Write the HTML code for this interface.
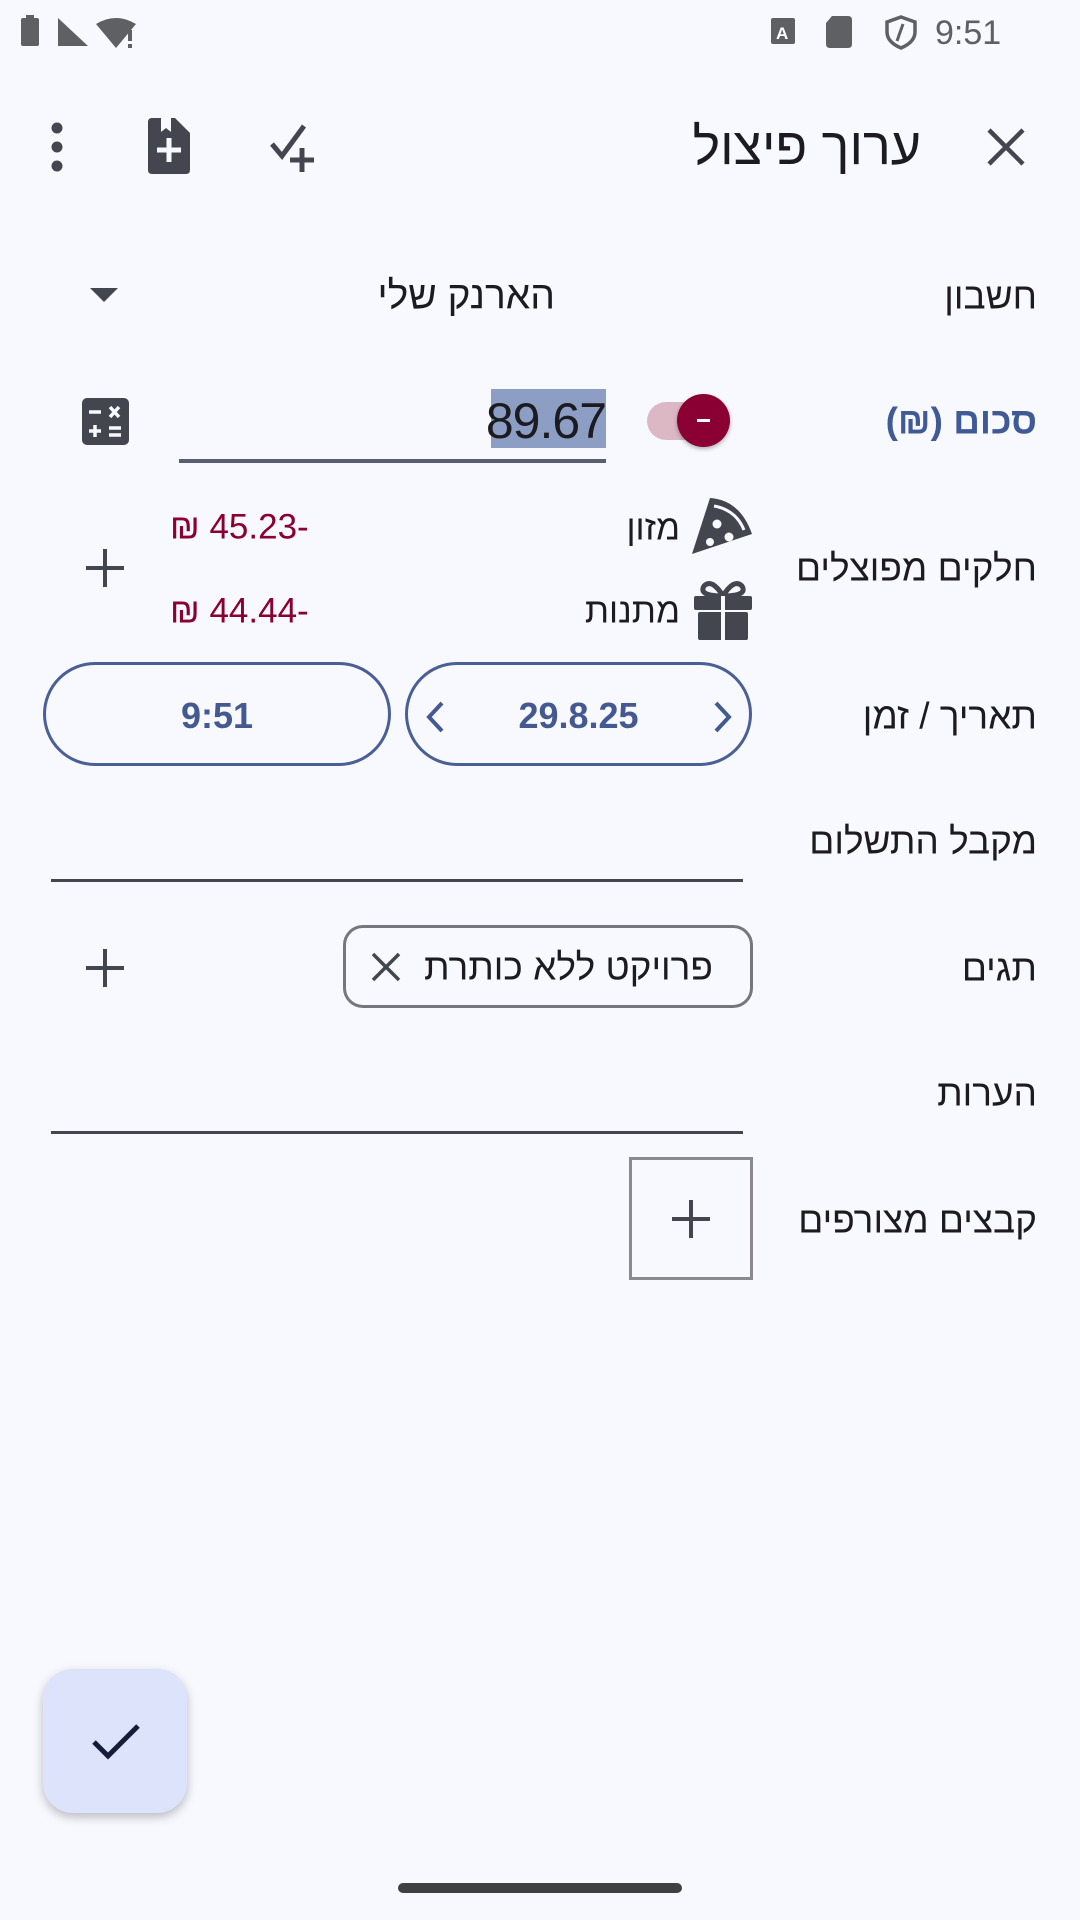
<!DOCTYPE html>
<html><head><meta charset="utf-8"><style>
*{margin:0;padding:0;box-sizing:border-box}
body{width:1080px;height:1920px;background:#f8f9ff;font-family:"Liberation Sans","DejaVu Sans",sans-serif;color:#1b1b21;position:relative;overflow:hidden}
.a{position:absolute}
.t{position:absolute;direction:rtl;white-space:nowrap;line-height:1;transform:translateY(-50%)}
.lbl{right:43px;font-size:37px;color:#1d1b20}
svg{position:absolute}
.ul{position:absolute;height:3px;background:#44464f}
</style></head><body>

<!-- status bar -->
<svg style="left:18px;top:14px" width="120" height="36" viewBox="0 0 120 36">
<rect x="3" y="4" width="18" height="28" rx="2" fill="#5f6064"/><rect x="8" y="1" width="8" height="4" fill="#5f6064"/>
<path d="M40 32 L40 4 L70 32 Z" fill="#5f6064"/>
<path d="M78 10 Q98 -2 118 10 L98 34 Z" fill="#5f6064"/>
<rect x="110" y="16" width="4" height="11" fill="#5f6064"/><rect x="110" y="30" width="4" height="4" fill="#5f6064"/>
</svg>
<svg style="left:770px;top:14px" width="160" height="38" viewBox="0 0 160 38">
<rect x="1" y="4" width="24" height="26" rx="2" fill="#5f6064"/><text x="6" y="25" font-size="17" font-family="Liberation Sans" fill="#fff" font-weight="bold">A</text>
<path d="M62 2 H78 Q82 2 82 6 V30 Q82 34 78 34 H60 Q56 34 56 30 V9 Z" fill="#5f6064"/>
<path d="M131 3 L145 8 V18 Q145 28 131 34 Q117 28 117 18 V8 Z" fill="none" stroke="#5f6064" stroke-width="3.5"/>
<path d="M133 10 L127 27" stroke="#5f6064" stroke-width="3"/>
</svg>
<div class="t" style="left:935px;top:33px;direction:ltr;font-size:34px;color:#5f6064">9:51</div>

<!-- toolbar -->
<svg style="left:985px;top:126px" width="42" height="42" viewBox="0 0 42 42"><path d="M4 4 L38 38 M38 4 L4 38" stroke="#44464f" stroke-width="4.5"/></svg>
<div class="t" style="right:159px;top:147px;font-size:52px;color:#1b1b21">ערוך פיצול</div>
<svg style="left:270px;top:122px" width="52" height="52" viewBox="0 0 52 52"><path d="M2 22 L12 34 L34 4" fill="none" stroke="#44464f" stroke-width="5"/><path d="M32 26 V50 M20 38 H44" stroke="#44464f" stroke-width="5"/></svg>
<svg style="left:147px;top:118px" width="44" height="56" viewBox="0 0 44 56"><path d="M5 0 H28 L43 15 V52 Q43 56 39 56 H5 Q1 56 1 52 V4 Q1 0 5 0Z" fill="#44464f"/><path d="M22 20 V44 M10 32 H34" stroke="#f8f9ff" stroke-width="5"/><path d="M14 0 V14 L19 10 L24 14 V0" fill="#f8f9ff"/></svg>
<svg style="left:50px;top:122px" width="14" height="50" viewBox="0 0 14 50"><circle cx="7" cy="6" r="5.5" fill="#44464f"/><circle cx="7" cy="25" r="5.5" fill="#44464f"/><circle cx="7" cy="44" r="5.5" fill="#44464f"/></svg>

<!-- account -->
<div class="t lbl" style="top:296px">חשבון</div>
<div class="t" style="right:525px;top:296px;font-size:39px">הארנק שלי</div>
<svg style="left:90px;top:288px" width="28" height="16" viewBox="0 0 28 16"><path d="M0 0 H28 L14 14Z" fill="#44464f"/></svg>

<!-- amount -->
<div class="t lbl" style="top:421px;color:#3f5a94;font-weight:bold">סכום (₪)</div>
<div class="a" style="left:647px;top:402px;width:80px;height:38px;border-radius:19px;background:#dcb8c4"></div>
<div class="a" style="left:677px;top:394px;width:53px;height:53px;border-radius:50%;background:#8b0032;box-shadow:0 2px 4px rgba(0,0,0,.3)"></div>
<div class="a" style="left:697px;top:419px;width:13px;height:3px;background:#fff"></div>
<div class="a" style="left:491px;top:389px;width:115px;height:59px;background:#8c9ec4"></div>
<div class="t" style="right:474px;top:421px;direction:ltr;font-size:50px;color:#1b1b21;letter-spacing:-1px">89.67</div>
<div class="ul" style="left:179px;top:459px;width:427px;height:4px;background:#5a5f70"></div>
<svg style="left:82px;top:398px" width="47" height="47" viewBox="0 0 47 47"><rect width="47" height="47" rx="5" fill="#44464f"/><path d="M7 14 H19 M28 9 L37 19 M37 9 L28 19 M7 33 H19 M13 27 V39 M27 30 H39 M27 37 H39" stroke="#f8f9ff" stroke-width="3.5"/></svg>

<!-- split parts -->
<div class="t lbl" style="top:568px">חלקים מפוצלים</div>
<svg style="left:692px;top:494px" width="62" height="60" viewBox="0 0 62 60"><path d="M18 4 Q48 6 60 40 L0 60 Z" fill="#44464f"/><path d="M22 12 Q44 16 52 36" fill="none" stroke="#f8f9ff" stroke-width="3"/><circle cx="25" cy="30" r="4.5" fill="#f8f9ff"/><circle cx="37" cy="43" r="4.5" fill="#f8f9ff"/><circle cx="18" cy="48" r="4" fill="#f8f9ff"/></svg>
<div class="t" style="right:400px;top:528px;font-size:35px">מזון</div>
<div class="t" style="left:170px;top:527px;direction:ltr;font-size:35px;color:#8a0030">₪ 45.23-</div>
<svg style="left:692px;top:578px" width="62" height="62" viewBox="0 0 62 62"><path d="M31 18 Q20 0 12 8 Q6 18 31 18 Q42 0 50 8 Q56 18 31 18" fill="none" stroke="#44464f" stroke-width="5"/><rect x="2" y="18" width="58" height="14" rx="2" fill="#44464f"/><rect x="6" y="34" width="50" height="28" rx="2" fill="#44464f"/><rect x="29" y="18" width="4" height="44" fill="#f8f9ff"/></svg>
<div class="t" style="right:400px;top:611px;font-size:35px">מתנות</div>
<div class="t" style="left:170px;top:611px;direction:ltr;font-size:35px;color:#8a0030">₪ 44.44-</div>
<svg style="left:85px;top:548px" width="40" height="40" viewBox="0 0 40 40"><path d="M20 1 V39 M1 20 H39" stroke="#44464f" stroke-width="4"/></svg>

<!-- date/time -->
<div class="t lbl" style="top:716px">תאריך / זמן</div>
<div class="a" style="left:405px;top:662px;width:347px;height:104px;border:3.5px solid #4a5f94;border-radius:52px"></div>
<div class="t" style="left:405px;width:347px;text-align:center;direction:ltr;top:716px;font-size:36px;color:#44598f;font-weight:bold">29.8.25</div>
<svg style="left:424px;top:700px" width="22" height="34" viewBox="0 0 22 34"><path d="M18 3 L5 17 L18 31" fill="none" stroke="#44598f" stroke-width="4"/></svg>
<svg style="left:712px;top:700px" width="22" height="34" viewBox="0 0 22 34"><path d="M4 3 L17 17 L4 31" fill="none" stroke="#44598f" stroke-width="4"/></svg>
<div class="a" style="left:43px;top:662px;width:348px;height:104px;border:3.5px solid #4a5f94;border-radius:52px"></div>
<div class="t" style="left:43px;width:348px;text-align:center;direction:ltr;top:716px;font-size:36px;color:#44598f;font-weight:bold">9:51</div>

<!-- payee -->
<div class="t lbl" style="top:841px">מקבל התשלום</div>
<div class="ul" style="left:51px;top:879px;width:692px"></div>

<!-- tags -->
<div class="t lbl" style="top:968px">תגים</div>
<div class="a" style="left:343px;top:925px;width:410px;height:83px;border:3px solid #75777f;border-radius:20px"></div>
<div class="t" style="right:367px;top:967px;font-size:37px">פרויקט ללא כותרת</div>
<svg style="left:371px;top:952px" width="30" height="30" viewBox="0 0 30 30"><path d="M2 2 L28 28 M28 2 L2 28" stroke="#44464f" stroke-width="3.5"/></svg>
<svg style="left:85px;top:948px" width="40" height="40" viewBox="0 0 40 40"><path d="M20 1 V39 M1 20 H39" stroke="#44464f" stroke-width="4"/></svg>

<!-- notes -->
<div class="t lbl" style="top:1093px">הערות</div>
<div class="ul" style="left:51px;top:1131px;width:692px"></div>

<!-- attachments -->
<div class="t lbl" style="top:1220px">קבצים מצורפים</div>
<div class="a" style="left:629px;top:1157px;width:124px;height:123px;border:3.5px solid #8a8a8e"></div>
<svg style="left:671px;top:1199px" width="40" height="40" viewBox="0 0 40 40"><path d="M20 1 V39 M1 20 H39" stroke="#44464f" stroke-width="4"/></svg>

<!-- FAB -->
<div class="a" style="left:43px;top:1669px;width:144px;height:144px;border-radius:30px;background:#dce3fb;box-shadow:0 4px 10px rgba(0,0,0,.25)"></div>
<svg style="left:92px;top:1722px" width="48" height="38" viewBox="0 0 48 38"><path d="M2 20 L16 34 L46 4" fill="none" stroke="#151c38" stroke-width="5"/></svg>

<!-- nav -->
<div class="a" style="left:398px;top:1883px;width:284px;height:10px;border-radius:5px;background:#3f3f44"></div>
</body></html>
